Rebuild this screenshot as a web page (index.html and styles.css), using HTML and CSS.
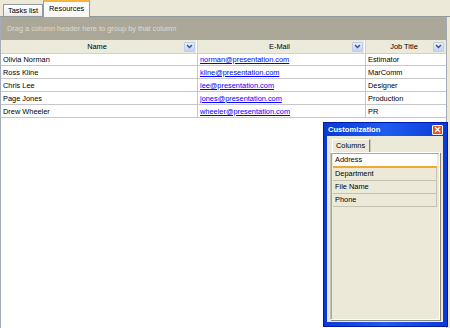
FILE: index.html
```html
<!DOCTYPE html>
<html lang="en">
<head>
    <meta charset="UTF-8">
    <title>Resources</title>
    <link rel="stylesheet" href="styles.css">
</head>
<body>
    <div class="tabs">
        <div class="tab">Tasks list</div>
        <div class="tab active">Resources</div>
    </div>

    <div class="frame">
        <div class="group-panel">Drag a column header here to group by that column</div>

        <div class="grid">
            <div class="head">
                <span class="caption">Name</span>
                <span class="drop"><svg width="7" height="5" viewBox="0 0 7 5"><path d="M1 1 L3.5 3.5 L6 1" fill="none" stroke="#3c4f7a" stroke-width="1.4"/></svg></span>
            </div>
            <div class="head">
                <span class="caption">E-Mail</span>
                <span class="drop"><svg width="7" height="5" viewBox="0 0 7 5"><path d="M1 1 L3.5 3.5 L6 1" fill="none" stroke="#3c4f7a" stroke-width="1.4"/></svg></span>
            </div>
            <div class="head last">
                <span class="caption">Job Title</span>
                <span class="drop"><svg width="7" height="5" viewBox="0 0 7 5"><path d="M1 1 L3.5 3.5 L6 1" fill="none" stroke="#3c4f7a" stroke-width="1.4"/></svg></span>
            </div>

            <div class="cell">Olivia Norman</div>
            <div class="cell"><a href="#">norman@presentation.com</a></div>
            <div class="cell last">Estimator</div>

            <div class="cell">Ross Kline</div>
            <div class="cell"><a href="#">kline@presentation.com</a></div>
            <div class="cell last">MarComm</div>

            <div class="cell">Chris Lee</div>
            <div class="cell"><a href="#">lee@presentation.com</a></div>
            <div class="cell last">Designer</div>

            <div class="cell">Page Jones</div>
            <div class="cell"><a href="#">jones@presentation.com</a></div>
            <div class="cell last">Production</div>

            <div class="cell">Drew Wheeler</div>
            <div class="cell"><a href="#">wheeler@presentation.com</a></div>
            <div class="cell last">PR</div>
        </div>
    </div>

    <!-- floating customization window -->
    <div class="custom">
        <div class="custom-title">
            <span>Customization</span>
            <span class="close"><svg width="7" height="7" viewBox="0 0 7 7"><path d="M1 1 L6 6 M6 1 L1 6" stroke="#fff" stroke-width="1.4"/></svg></span>
        </div>
        <div class="custom-body">
            <div class="custom-tabs">
                <div class="custom-tab">Columns</div>
            </div>
            <div class="column-list">
                <div class="column-item focused">Address</div>
                <div class="column-item">Department</div>
                <div class="column-item">File Name</div>
                <div class="column-item">Phone</div>
            </div>
        </div>
    </div>
</body>
</html>
```

FILE: styles.css
```css
body {
    margin: 0;
    height: 328px;
    overflow: hidden;
    background: #ece9d8;
    font-family: "Liberation Sans", Arial, sans-serif;
    font-size: 7.4px;
    color: #000;
    position: relative;
}

/* tab strip */
.tabs {
    height: 17px;
    display: flex;
    align-items: flex-end;
    padding-left: 3px;
    border-bottom: 1px solid #919b9c;
    box-sizing: border-box;
}

.tab {
    height: 12px;
    line-height: 11px;
    padding: 0 4px;
    border: 1px solid #919b9c;
    border-bottom: none;
    background: linear-gradient(#fefefe, #ecebe6);
    box-sizing: border-box;
    white-space: nowrap;
}

.tab.active {
    height: 17px;
    line-height: 13px;
    padding: 0 5px;
    margin-bottom: -1px;
    border-top: 2px solid #f7b33c;
    background: linear-gradient(#ffffff, #f7f6f2);
}

/* grid frame */
.frame {
    height: 311px;
    margin-right: 3px;
    border-left: 1px solid #a5acb5;
    border-right: 1px solid #a5acb5;
    background: #fff;
}

.group-panel {
    height: 23px;
    line-height: 24px;
    padding-left: 6px;
    background: #aca899;
    color: #dcdad0;
    white-space: nowrap;
}

.grid {
    display: grid;
    grid-template-columns: 197px 168px 1fr;
    grid-auto-rows: 13px;
}

.head {
    height: 14px;
    display: flex;
    align-items: center;
    background: #ebeadb;
    border-bottom: 1px solid #d6d2c2;
    border-right: 1px solid #d6d2c2;
    box-shadow: inset -1px 0 0 #fff;
    box-sizing: border-box;
    padding-right: 2px;
}

.head.last {
    border-right: none;
    box-shadow: none;
}

.caption {
    flex: 1;
    text-align: center;
    padding-left: 9px;
}

.drop {
    width: 9px;
    height: 8px;
    display: flex;
    align-items: center;
    justify-content: center;
    background: linear-gradient(#e6eefc, #c3d3f5);
    border: 1px solid #c0cde8;
    border-radius: 1px;
}

.cell {
    height: 13px;
    line-height: 13px;
    padding-left: 2px;
    border-bottom: 1px solid #c7c7c7;
    border-right: 1px solid #c7c7c7;
    box-sizing: border-box;
    white-space: nowrap;
    overflow: hidden;
}

.cell.last {
    border-right: none;
}

.cell a {
    color: #0000ff;
}

/* customization window */
.custom {
    position: absolute;
    left: 323px;
    top: 122px;
    width: 125px;
    height: 205px;
    box-sizing: border-box;
    background: linear-gradient(90deg, #0a3ad6, #1f5cf0 50%, #0a3ad6);
    border: 1px solid #0019a8;
    padding: 0 4px 4px 3px;
    display: flex;
    flex-direction: column;
}

.custom-title {
    height: 13px;
    display: flex;
    align-items: center;
    justify-content: space-between;
    color: #fff;
    font-weight: bold;
    font-size: 7.6px;
    padding-left: 1px;
}

.close {
    width: 9px;
    height: 8px;
    display: flex;
    align-items: center;
    justify-content: center;
    background: #e2532a;
    border: 1px solid #fff;
    border-radius: 1px;
}

.custom-body {
    flex: 1;
    background: #ece9d8;
    padding: 3px 1px 2px 3px;
    display: flex;
    flex-direction: column;
}

.custom-tabs {
    display: flex;
    padding-left: 2px;
}

.custom-tab {
    height: 12px;
    line-height: 12px;
    padding: 0 4px 0 3px;
    border-top: 1px solid #fff;
    border-left: 1px solid #fff;
    border-right: 1px solid #8a877a;
    box-shadow: 1px 0 0 #c9c6b6;
}

.column-list {
    flex: 1;
    border-top: 1px solid #fff;
    border-left: 1px solid #c5c2b2;
    border-right: 1px solid #fff;
    border-bottom: 1px solid #fff;
    box-shadow: inset 1px 1px 0 #aca899, 1px 1px 0 #8a877a;
    padding: 1px 2px 0 2px;
    margin-right: 2px;
}

.column-item {
    height: 13px;
    line-height: 12px;
    padding-left: 2px;
    border-bottom: 1px solid #c5c2b2;
    border-right: 1px solid #c5c2b2;
    box-sizing: border-box;
}

.column-item.focused {
    height: 14px;
    background: #fff;
    border-bottom: 2px solid #f0a830;
    border-right: none;
}
```
